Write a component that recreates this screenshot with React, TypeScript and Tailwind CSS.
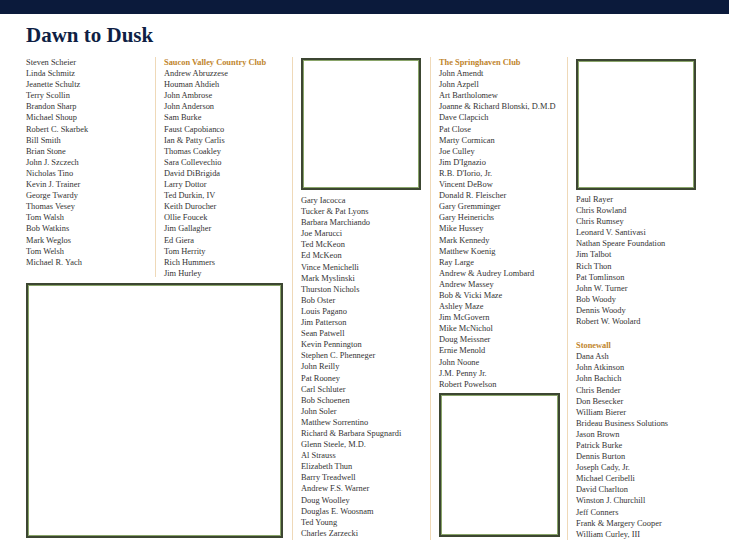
import React from "react";

const c1 = ["Steven Scheier","Linda Schmitz","Jeanette Schultz","Terry Scollin","Brandon Sharp","Michael Shoup","Robert C. Skarbek","Bill Smith","Brian Stone","John J. Szczech","Nicholas Tino","Kevin J. Trainer","George Twardy","Thomas Vesey","Tom Walsh","Bob Watkins","Mark Weglos","Tom Welsh","Michael R. Yach"];
const c2 = ["Andrew Abruzzese","Houman Ahdieh","John Ambrose","John Anderson","Sam Burke","Faust Capobianco","Ian & Patty Carlis","Thomas Coakley","Sara Collevechio","David DiBrigida","Larry Dottor","Ted Durkin, IV","Keith Durocher","Ollie Foucek","Jim Gallagher","Ed Giera","Tom Herrity","Rich Hummers","Jim Hurley"];
const c3 = ["Gary Iacocca","Tucker & Pat Lyons","Barbara Marchiando","Joe Marucci","Ted McKeon","Ed McKeon","Vince Menichelli","Mark Myslinski","Thurston Nichols","Bob Oster","Louis Pagano","Jim Patterson","Sean Patwell","Kevin Pennington","Stephen C. Phenneger","John Reilly","Pat Rooney","Carl Schluter","Bob Schoenen","John Soler","Matthew Sorrentino","Richard & Barbara Spugnardi","Glenn Steele, M.D.","Al Strauss","Elizabeth Thun","Barry Treadwell","Andrew F.S. Warner","Doug Woolley","Douglas E. Woosnam","Ted Young","Charles Zarzecki"];
const c4 = ["John Amendt","John Azpell","Art Bartholomew","Joanne & Richard Blonski, D.M.D","Dave Clapcich","Pat Close","Marty Cormican","Joe Culley","Jim D'Ignazio","R.B. D'Iorio, Jr.","Vincent DeBow","Donald R. Fleischer","Gary Gremminger","Gary Heinerichs","Mike Hussey","Mark Kennedy","Matthew Koenig","Ray Large","Andrew & Audrey Lombard","Andrew Massey","Bob & Vicki Maze","Ashley Maze","Jim McGovern","Mike McNichol","Doug Meissner","Ernie Menold","John Noone","J.M. Penny Jr.","Robert Powelson"];
const c5a = ["Paul Rayer","Chris Rowland","Chris Rumsey","Leonard V. Santivasi","Nathan Speare Foundation","Jim Talbot","Rich Thon","Pat Tomlinson","John W. Turner","Bob Woody","Dennis Woody","Robert W. Woolard"];
const c5b = ["Dana Ash","John Atkinson","John Bachich","Chris Bender","Don Besecker","William Bierer","Brideau Business Solutions","Jason Brown","Patrick Burke","Dennis Burton","Joseph Cady, Jr.","Michael Ceribelli","David Charlton","Winston J. Churchill","Jeff Conners","Frank & Margery Cooper","William Curley, III"];

const L = ({ items }: { items: string[] }) => (
  <div>{items.map((n) => <div key={n} className="h-[11.1px] leading-[11.1px] whitespace-nowrap">{n}</div>)}</div>
);
const H = ({ t }: { t: string }) => (
  <div className="h-[11.1px] leading-[11.1px] font-bold text-[#c0852c] whitespace-nowrap">{t}</div>
);
const Photo = ({ w, h }: { w: number; h: number }) => (
  <div className="bg-white border-2 border-[#3c4632] shadow-[inset_0_0_0_1px_#8aa56a]" style={{ width: w, height: h }} />
);

export default function App() {
  return (
    <div className="w-[729px] h-[540px] overflow-hidden bg-white text-[#333] text-[8.4px]" style={{ fontFamily: '"Liberation Serif", serif' }}>
      <div className="h-[14px] bg-[#0b1a3b]" />
      <div className="pl-[26px] pt-[9px] h-[43px] text-[21px] font-bold text-[#0f1f45] leading-[24px]">Dawn to Dusk</div>
      <div className="flex pl-[26px]">
        <div className="flex flex-col w-[266px]">
          <div className="flex h-[220px]">
            <div className="w-[129px]"><L items={c1} /></div>
            <div className="border-l border-[#efd9b8] pl-[8px] flex-1"><H t="Saucon Valley Country Club" /><L items={c2} /></div>
          </div>
          <div className="mt-[6px]"><Photo w={257} h={255} /></div>
        </div>
        <div className="w-[138px] h-[483px] border-l border-[#efd9b8] pl-[8px] pt-[1px]">
          <Photo w={120} h={132} />
          <div className="mt-[5px]"><L items={c3} /></div>
        </div>
        <div className="w-[137px] h-[483px] border-l border-[#efd9b8] pl-[8px]">
          <H t="The Springhaven Club" /><L items={c4} />
          <div className="mt-[3px]"><Photo w={121} h={144} /></div>
        </div>
        <div className="w-[137px] h-[483px] border-l border-[#efd9b8] pl-[8px] pt-[2px]">
          <Photo w={120} h={131} />
          <div className="mt-[4px]"><L items={c5a} /></div>
          <div className="mt-[13px]"><H t="Stonewall" /><L items={c5b} /></div>
        </div>
      </div>
    </div>
  );
}
